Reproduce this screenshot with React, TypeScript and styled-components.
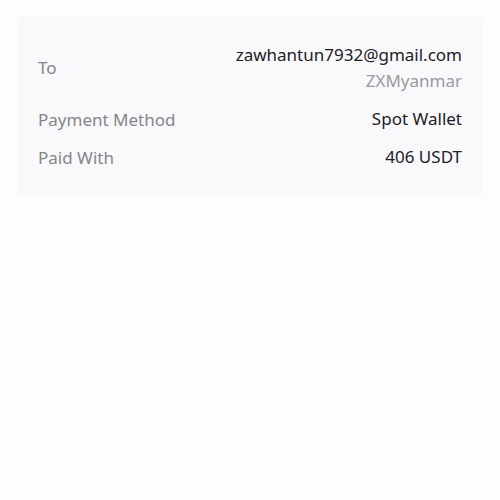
import styled, { createGlobalStyle } from 'styled-components'

const GlobalStyle = createGlobalStyle`
  body {
    margin: 0;
    background: #fdfdfe;
    font-family: 'Noto Sans', 'Inter', sans-serif;
  }
`

const rows = [
  { label: 'To', value: 'zawhantun7932@gmail.com', sub: 'ZXMyanmar' },
  { label: 'Payment Method', value: 'Spot Wallet' },
  { label: 'Paid With', value: '406 USDT' },
]

const App = () => {
  return (
    <Page>
      <GlobalStyle />
      <Card>
        {rows.map((r) => (
          <Row key={r.label} $hasSub={!!r.sub}>
            <Label>{r.label}</Label>
            <Values>
              <Value>{r.value}</Value>
              {r.sub && <Sub>{r.sub}</Sub>}
            </Values>
          </Row>
        ))}
      </Card>
    </Page>
  )
}

export default App

const Page = styled.div`
  width: 500px;
  height: 500px;
  padding: 17px 18px;
  box-sizing: border-box;
`

const Card = styled.div`
  background: #f9f8fb;
  border-radius: 4px;
  padding: 24px 20px 24px;
  display: flex;
  flex-direction: column;
  gap: 10px;
`

const Row = styled.div<{ $hasSub?: boolean }>`
  display: flex;
  justify-content: space-between;
  align-items: center;
  margin-bottom: ${(p) => (p.$hasSub ? '2px' : '0')};
`

const Label = styled.span`
  font-size: 17px;
  color: #85858c;
`

const Values = styled.div`
  display: flex;
  flex-direction: column;
  align-items: flex-end;
`

const Value = styled.span`
  font-size: 17px;
  line-height: 28px;
  color: #1e2026;
`

const Sub = styled.span`
  font-size: 17px;
  line-height: 24px;
  color: #9a9aa0;
`
